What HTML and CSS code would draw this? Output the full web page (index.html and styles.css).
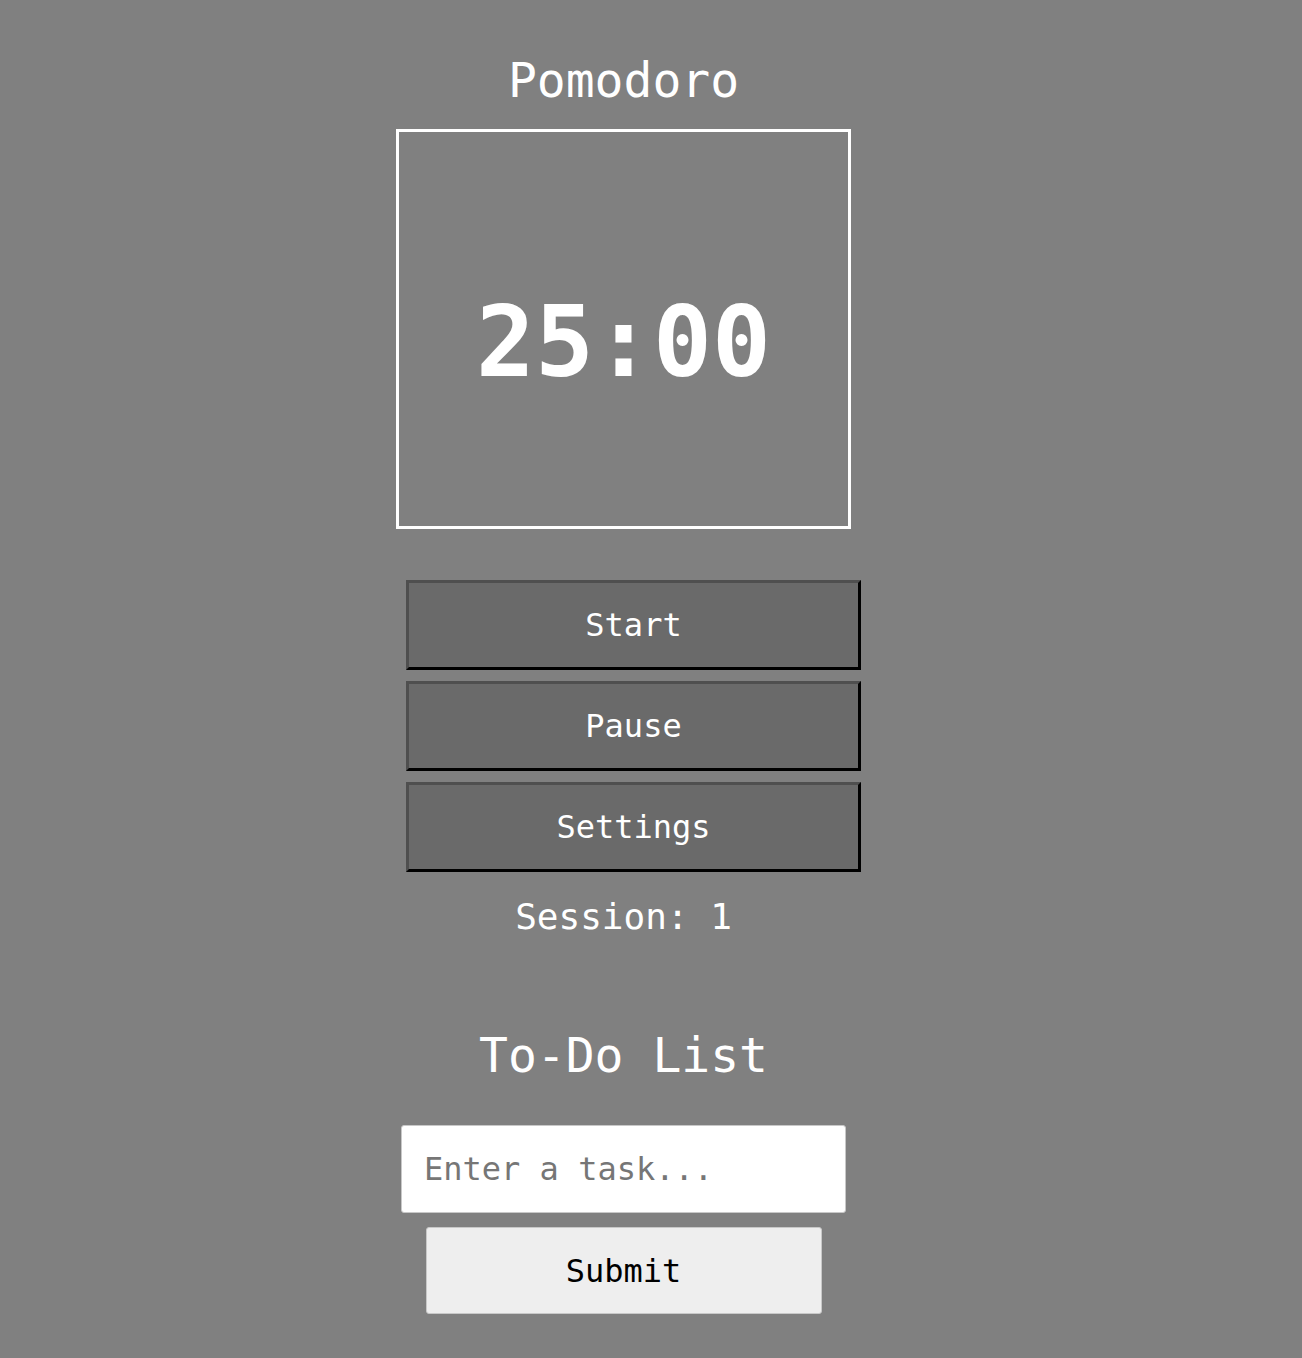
FILE: index.html
```html
<!DOCTYPE html>
<html lang="en">
<head>
<meta charset="utf-8">
<title>Pomodoro</title>
<link rel="stylesheet" href="styles.css">
</head>
<body>
<div class="page">
  <h1 class="title">Pomodoro</h1>
  <div class="timer-box">
    <div class="timer">25:00</div>
  </div>
  <div class="controls">
    <button class="ctrl-btn">Start</button>
    <button class="ctrl-btn">Pause</button>
    <button class="ctrl-btn">Settings</button>
  </div>
  <div class="session">Session: 1</div>
  <h2 class="todo-title">To-Do List</h2>
  <input class="task-input" type="text" placeholder="Enter a task...">
  <button class="submit-btn">Submit</button>
</div>
</body>
</html>
```

FILE: styles.css
```css
html, body {
  margin: 0;
  padding: 0;
  background: #808080;
}

body {
  font-family: "DejaVu Sans Mono", "Liberation Mono", monospace;
  color: #ffffff;
}

.page {
  display: flex;
  flex-direction: column;
  align-items: center;
  padding: 56px 55px 0 0;
}

.title {
  margin: 0;
  font-size: 48px;
  line-height: 1;
  font-weight: normal;
  height: 48px;
}

.timer-box {
  margin-top: 25px;
  width: 449px;
  height: 394px;
  border: 3px solid #ffffff;
  display: flex;
  align-items: center;
  justify-content: center;
}

.timer {
  font-size: 98px;
  line-height: 1;
  font-weight: bold;
  padding-top: 26px;
}

.controls {
  margin-top: 51px;
  margin-left: 20px;
  display: flex;
  flex-direction: column;
  gap: 11px;
}

.ctrl-btn {
  width: 455px;
  height: 90px;
  box-sizing: border-box;
  background: #6a6a6a;
  color: #ffffff;
  font-family: inherit;
  font-size: 32px;
  border-style: solid;
  border-width: 3px;
  border-color: #4f4f4f #000000 #000000 #4f4f4f;
  padding: 0;
}

.session {
  margin-top: 27px;
  font-size: 36px;
  line-height: 1;
  height: 36px;
}

.todo-title {
  margin: 96px 0 0 0;
  font-size: 48px;
  line-height: 1;
  font-weight: normal;
  height: 48px;
}

.task-input {
  margin-top: 46px;
  width: 445px;
  height: 88px;
  box-sizing: border-box;
  background: #ffffff;
  border: 1px solid #c8c8c8;
  border-radius: 3px;
  padding: 0 22px;
  font-family: inherit;
  font-size: 32px;
  color: #000000;
  outline: none;
}

.task-input::placeholder {
  color: #767676;
}

.submit-btn {
  margin-top: 14px;
  width: 396px;
  height: 87px;
  box-sizing: border-box;
  background: #eeeeee;
  border: 1px solid #c8c8c8;
  border-radius: 3px;
  font-family: inherit;
  font-size: 32px;
  color: #000000;
  padding: 0;
}
```
